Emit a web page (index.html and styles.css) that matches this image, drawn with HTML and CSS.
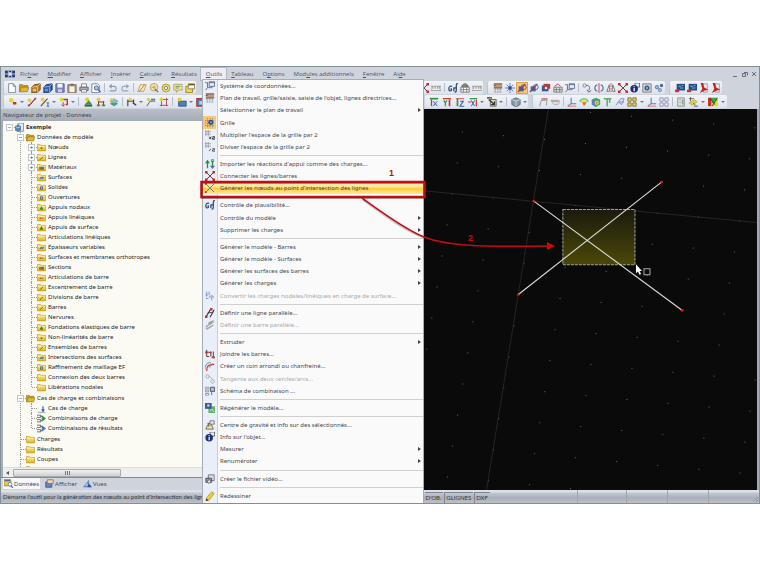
FILE: index.html
```html
<!DOCTYPE html>
<html lang="fr">
<head>
<meta charset="utf-8">
<title>Exemple</title>
<link rel="stylesheet" href="styles.css">
</head>
<body>
<svg class="defs" aria-hidden="true">
<defs>
<linearGradient id="gold" x1="0" y1="0" x2="0" y2="1"><stop offset="0" stop-color="#fbe98a"/><stop offset="1" stop-color="#e3b62c"/></linearGradient>
<symbol id="logo" viewBox="0 0 12 12"><path d="M0 2h12v8H0z" fill="#263a78"/><path d="M0 6h12M4 2v8M8 2v8" stroke="#dfe4f2"/><path d="M5 4h2v4H5z" fill="#fff"/></symbol>
<symbol id="folder" viewBox="0 0 12 12"><path d="M.5 2h4l1 1.200h6v7.300H.5z" fill="url(#gold)" stroke="#b98f22" stroke-width=".8"/><path d="M1.500 4.500h9" stroke="#fff4b0"/></symbol>
<symbol id="fopen" viewBox="0 0 12 12"><path d="M.5 10.500V2h4l1 1h5v2" fill="#c69f20" stroke="#8f701a" stroke-width=".8"/><path d="M.5 10.500 3 5h9l-2 5.500z" fill="#dfb92f" stroke="#8f701a" stroke-width=".8"/></symbol>
<symbol id="fred" viewBox="0 0 12 12"><use href="#folder"/><path d="M5 6h2v2H5z" fill="#a33"/></symbol>
<symbol id="fline" viewBox="0 0 12 12"><use href="#folder"/><path d="m4 9 4-4" stroke="#754b10" stroke-width="1.200"/></symbol>
<symbol id="fmat" viewBox="0 0 12 12"><use href="#folder"/><path d="M3 5h2v4H3z" fill="#d33"/><path d="M5 5h2v4H5z" fill="#393"/><path d="M7 5h2v4H7z" fill="#35b"/></symbol>
<symbol id="fsurf" viewBox="0 0 12 12"><use href="#folder"/><path d="m3 8 2-3h5L8 8z" fill="#5d87a8"/></symbol>
<symbol id="fsolid" viewBox="0 0 12 12"><use href="#folder"/><path d="M4 4.500h4v4.500H4z" fill="#4b7391"/><path d="M5.200 5.700h1.500v2H5.200z" fill="#a9cad8"/></symbol>
<symbol id="fsup" viewBox="0 0 12 12"><use href="#folder"/><path d="m3.500 9 2.500-5 2.500 5z" fill="#23853a"/></symbol>
<symbol id="fhinge" viewBox="0 0 12 12"><use href="#folder"/><path d="M3 7h6" stroke="#a0641b"/><circle cx="5" cy="7" r="1" fill="#d44"/></symbol>
<symbol id="book" viewBox="0 0 12 12"><path d="M4 0h7.500v11H4z" fill="#e4ebf4" stroke="#5f7390"/><path d="m0 4 4-2 4 2v6l-4 2-4-2z" fill="#5c83ad"/><path d="m1 5 3 1.500L7 5" stroke="#d9e8f5" fill="none"/></symbol>
<symbol id="lcase" viewBox="0 0 12 12"><path d="M1 11h10" stroke="#777"/><path d="M8 3v6" stroke="#2c5fae" stroke-width="1.500"/><path d="m5.500 7 2.500 4 2.500-4z" fill="#2c5fae"/></symbol>
<symbol id="lcomb" viewBox="0 0 12 12"><path d="M0 1.500h5v3H0M0 7.500h5v3H0M5 3h2v6H5" fill="none" stroke="#444"/><path d="M7 2l5 4-5 4z" fill="#279447"/></symbol>
<symbol id="rcomb" viewBox="0 0 12 12"><path d="M0 1.500h5v3H0M0 7.500h5v3H0M5 3h2v6H5" fill="none" stroke="#444"/><path d="M7 2l5 4-5 4z" fill="#3f74c5"/></symbol>
<symbol id="new" viewBox="0 0 12 12"><path d="M2 .8h5.500L10 3.500v8H2z" fill="#fff" stroke="#777a88"/><path d="M7.500 1v3H10" fill="none" stroke="#777a88"/></symbol>
<symbol id="cubeo" viewBox="0 0 12 12"><path d="m1 5 3-3 7-1v7l-3 3-7 1z" fill="#b77b2d" stroke="#6f4517"/><path d="m1 5 7-1 3-3M8 4v7" stroke="#f3cc83" fill="none"/><path d="M2 7h4v3H2z" fill="#efc35b"/></symbol>
<symbol id="cubeb" viewBox="0 0 12 12"><path d="m1 5 3-3 7-1v7l-3 3-7 1z" fill="#315a9c" stroke="#1b3567"/><path d="m1 5 7-1 3-3M8 4v7" stroke="#9fc0e8" fill="none"/><path d="M2 7h4v3H2z" fill="#6796d2"/></symbol>
<symbol id="save" viewBox="0 0 12 12"><path d="M1 1h10v10H1z" fill="#7d83c3" stroke="#50558c"/><path d="M3 1h6v4.500H3z" fill="#f2f3fb"/><path d="M3.500 7.500h5V11h-5z" fill="#c9cce4"/></symbol>
<symbol id="clip" viewBox="0 0 12 12"><path d="M1 2h10v9.500H1z" fill="#b19a7c" stroke="#75644f"/><path d="M3 4h6v7H3z" fill="#f4f1ea"/><path d="M4 1h4v2H4z" fill="#666"/></symbol>
<symbol id="print" viewBox="0 0 12 12"><path d="M3 1h6v4H3z" fill="#fff" stroke="#777"/><path d="M1 5h10v4H1z" fill="#a8adb9" stroke="#555b69"/><path d="M3 8h6v3H3z" fill="#fff" stroke="#777"/></symbol>
<symbol id="prev" viewBox="0 0 12 12"><path d="M1 1h7l2 2v8.500H1z" fill="#fff" stroke="#68779b"/><circle cx="6.500" cy="6" r="2.500" fill="#a9cbe8" stroke="#35568a"/><path d="m8.500 8 3 3" stroke="#35568a" stroke-width="1.500"/></symbol>
<symbol id="undo" viewBox="0 0 12 12"><path d="M2 4h6a3 3 0 0 1 0 5.500H2" fill="none" stroke="#8d9aae" stroke-width="1.400"/><path d="M4.500 1 1 4l3.500 3z" fill="#8d9aae"/></symbol>
<symbol id="redo" viewBox="0 0 12 12"><path d="M10 4H4a3 3 0 0 0 0 5.500h6" fill="none" stroke="#9ba6b6" stroke-width="1.400"/><path d="M7.500 1 11 4 7.500 7z" fill="#9ba6b6"/></symbol>
<symbol id="para" viewBox="0 0 12 12"><path d="m1 10 3-8h7l-3 8z" fill="#fbf0bd" stroke="#b59a35"/><path d="m3 10 6-8" stroke="#c64b37"/></symbol>
<symbol id="bub" viewBox="0 0 12 12"><circle cx="6" cy="5" r="4.500" fill="#f2e7ad" stroke="#ad974a"/><path d="M3 5h5M6 3v4" stroke="#ad974a"/><path d="m7 7 4 4" stroke="#666" stroke-width="1.500"/></symbol>
<symbol id="coin" viewBox="0 0 12 12"><circle cx="6" cy="6" r="4.800" fill="#efd875" stroke="#ae9130"/><circle cx="6" cy="6" r="2" fill="#fffbe1" stroke="#777"/></symbol>
<symbol id="note" viewBox="0 0 12 12"><path d="M1 1.500h10v7H6l-2 3v-3H1z" fill="#f7e592" stroke="#a4a168"/><path d="M3 4h6M3 6h4" stroke="#588a70"/></symbol>
<symbol id="win" viewBox="0 0 12 12"><path d="M1 4h8v7.500H1z" fill="#f8d64a" stroke="#9b7c20"/><path d="M4 1h7.500v6H4z" fill="#fffbe0" stroke="#7f7a55"/><path d="M4 2h7.500" stroke="#6c4a22" stroke-width="1.500"/></symbol>
<symbol id="node" viewBox="0 0 12 12"><circle cx="4" cy="4" r="2.800" fill="#e8d23c"/><path d="M6 6h4v3H6z" fill="#b5382c"/></symbol>
<symbol id="seg" viewBox="0 0 12 12"><path d="m2 11 8-9" stroke="#8a2f25" stroke-width="1.300"/><circle cx="3" cy="4" r="2.300" fill="#e8d23c"/><path d="M9 1h2v2H9zM1 9h2v2H1z" fill="#c33"/></symbol>
<symbol id="segi" viewBox="0 0 12 12"><path d="m1 11 8-9" stroke="#6a4a20" stroke-width="1.300"/><circle cx="3" cy="3" r="2.300" fill="#e8d23c"/><path d="M8 7h3M8 11h3M9.500 7v4" stroke="#315a9c"/></symbol>
<symbol id="rectr" viewBox="0 0 12 12"><path d="M5 3h5v6H8" fill="none" stroke="#b3352f" stroke-width="1.600"/><circle cx="3" cy="3" r="2.300" fill="#e8d23c"/><path d="M5 6v5M3 9l2 2 2-2" stroke="#b3352f" fill="none"/></symbol>
<symbol id="sup" viewBox="0 0 12 12"><circle cx="5" cy="3" r="2.500" fill="#e5cd38"/><path d="m2 9 5-5 4 5z" fill="#3d944a"/><path d="M2 9h9v2.500H2z" fill="#286a36"/></symbol>
<symbol id="supd" viewBox="0 0 12 12"><circle cx="3" cy="3" r="2.300" fill="#e5cd38"/><path d="M3 5v6M9 5v6M3 6h7" stroke="#a5322c" stroke-width="1.200"/><path d="M1 9h4v2H1zM7 9h4v2H7z" fill="#3d944a"/></symbol>
<symbol id="layer" viewBox="0 0 12 12"><path d="m1 8 5-3 5 3-5 3z" fill="#4a9b76"/><path d="m1 5 5-3 5 3-5 3z" fill="#83bfd0" stroke="#44879a" stroke-width=".5"/><circle cx="3" cy="3" r="1.800" fill="#e5cd38"/></symbol>
<symbol id="dim" viewBox="0 0 12 12"><path d="M1 3v8M1 5h7M8 3v5" stroke="#333" stroke-width="1.200"/><circle cx="4" cy="3" r="2" fill="#e5cd38"/><path d="m7 7 4 3" stroke="#333" stroke-width="1.500"/></symbol>
<symbol id="txt" viewBox="0 0 12 12"><path d="m1 11 4-6h6" stroke="#444" fill="none"/><circle cx="3" cy="3" r="2" fill="#e5cd38"/><path d="M6 2h5v2H6z" fill="#777"/></symbol>
<symbol id="frame" viewBox="0 0 12 12"><path d="M1 3h10M3 1v10M9 1v10M1 10h10" stroke="#a5423c"/><circle cx="3" cy="3" r="2" fill="#e5cd38"/></symbol>
<symbol id="blue" viewBox="0 0 12 12"><path d="M2 5h9v6H2z" fill="#4e81bd" stroke="#284b7a"/><circle cx="3" cy="3" r="2.300" fill="#e5cd38"/></symbol>
<symbol id="blur" viewBox="0 0 12 12"><path d="M1 2h10v9H1z" fill="#4e81bd" stroke="#a13a35" stroke-width="1.500"/><path d="M4 5h5v4H4z" fill="#b8d2e8"/></symbol>
<symbol id="fx" viewBox="0 0 12 12"><path d="M5 4c-3-1-4 1-4 3s1 3 3 2V7H3M7 5v5M7 7c1-2 3-1 3 0M12 1c-2-1-2 1-2 3v4c0 2-1 3-2 3" fill="none" stroke="#3d5279" stroke-width="1.600"/></symbol>
<symbol id="tbl" viewBox="0 0 12 12"><path d="M1 5h10v6H1z" fill="#fff" stroke="#666"/><path d="M1 8h10M4 5v6M8 5v6" stroke="#777"/><path d="M2 4c2-4 6-4 8 0z" fill="#8a9a78" stroke="#555"/></symbol>
<symbol id="num" viewBox="0 0 12 12"><path d="M0 4h12v5H0z" fill="#eee" stroke="#999"/><path d="M2 4v3M5 4v3M8 4v3M10 4v3" stroke="#888"/></symbol>
<symbol id="plane" viewBox="0 0 12 12"><path d="M1 1h10v5H1z" fill="#c39a78"/><path d="M1 1h10M1 6h10M1 3h2" stroke="#444"/><path d="M1 8h10M1 11h10M3 6v6M6 6v6M9 6v6" stroke="#888" stroke-dasharray="1 1"/></symbol>
<symbol id="snap" viewBox="0 0 12 12"><path d="M6 0v12M0 6h12M2 2l8 8M10 2l-8 8" stroke="#637cb3" stroke-width="1.100"/><circle cx="6" cy="6" r="2" fill="#2b448b"/></symbol>
<symbol id="gridi" viewBox="0 0 12 12"><path d="M0 3h12M0 6h12M0 9h12M3 0v12M6 0v12M9 0v12" stroke="#75736d" stroke-dasharray="1 1"/><circle cx="7" cy="5" r="3" fill="#294b91"/><circle cx="7" cy="5" r="1" fill="#8cc0ef"/></symbol>
<symbol id="osnap" viewBox="0 0 12 12"><path d="M2 4h6v6H2z" fill="#3966a5"/><path d="m1 11 9-10" stroke="#b83838" stroke-width="1.500"/><circle cx="8" cy="5" r="3" fill="none" stroke="#315a9c"/></symbol>
<symbol id="redb" viewBox="0 0 12 12"><path d="M1 3h8v7H1z" fill="#315a9c"/><path d="M3 1h8v6H3z" fill="#b43a3f"/><circle cx="6" cy="6" r="1.500" fill="#fff"/></symbol>
<symbol id="gridr" viewBox="0 0 12 12"><path d="M1 5h10v6H1z" fill="#ddd" stroke="#777"/><path d="M1 8h10M4 5v6M8 5v6" stroke="#777"/><path d="m2 4 4-3 3 3" stroke="#b33" fill="none"/></symbol>
<symbol id="coord" viewBox="0 0 12 12"><path d="M5 1h6.500v5.500H5z" fill="#e8edf6" stroke="#53617c"/><path d="M5 2h6.500" stroke="#53617c"/><path d="M3 2v6h6M3 8l-2.500 3M3 2H0" stroke="#53617c" fill="none"/></symbol>
<symbol id="curve" viewBox="0 0 12 12"><circle cx="3" cy="3" r="2" fill="none" stroke="#777"/><path d="M5 3c4-1 5 3 3 6M6 8l2 3 3-2" fill="none" stroke="#555"/></symbol>
<symbol id="rot" viewBox="0 0 12 12"><path d="M6 0v12" stroke="#c33"/><path d="M4 2c-4 1-4 7 0 8M8 2c4 1 4 7 0 8" fill="none" stroke="#54719f" stroke-width="1.300"/></symbol>
<symbol id="mirror" viewBox="0 0 12 12"><path d="M6 0v12" stroke="#c33" stroke-dasharray="2 1"/><path d="m1 10 3-8v8zM11 10 8 2v8z" fill="#fff" stroke="#666"/></symbol>
<symbol id="xnode" viewBox="0 0 12 12"><path d="m1 1 10 10M11 1 1 11" stroke="#333" stroke-width="1.100"/><path d="M0 0h3v3H0zM9 0h3v3H9zM0 9h3v3H0zM9 9h3v3H9zM5 5h2v2H5z" fill="#c22d2d"/></symbol>
<symbol id="xgen" viewBox="0 0 12 12"><path d="m1 1 10 10M11 1 1 11" stroke="#777350" stroke-width="1.100"/><path d="M0 0h2v2H0zM0 10h2v2H0z" fill="#c22d2d"/><circle cx="6" cy="6" r="1.500" fill="#39a7ce"/></symbol>
<symbol id="info" viewBox="0 0 12 12"><path d="M6 0h5.500v5H6z" fill="#e8edf6" stroke="#555"/><circle cx="5" cy="7" r="4.500" fill="#1c2f78"/><path d="M5 4v1M5 6v4" stroke="#fff" stroke-width="1.500"/></symbol>
<symbol id="lens" viewBox="0 0 12 12"><path d="M1 1h10v10H1z" fill="#d2d3c9" stroke="#777"/><circle cx="6" cy="6" r="3" fill="#335a9a"/><circle cx="6" cy="6" r="1" fill="#fff"/></symbol>
<symbol id="gears" viewBox="0 0 12 12"><circle cx="3.500" cy="5" r="2.500" fill="#6f8ab6"/><circle cx="9" cy="3" r="2" fill="#4b6798"/><circle cx="7" cy="8.500" r="2.500" fill="#7b96bf"/><path d="M3.500 5h0M7 8.500h0" stroke="#fff" stroke-width="1.600" stroke-linecap="round"/></symbol>
<symbol id="mona" viewBox="0 0 12 12"><path d="M2 1h10v8H2z" fill="#244e83"/><path d="M4 4h3M8 3h2M6 6h4" stroke="#8cc1e8"/><path d="M0 8h5v3H0z" fill="#c33"/></symbol>
<symbol id="pdf" viewBox="0 0 12 12"><path d="M5 1h5v10H5z" fill="#e9e9ed" stroke="#999"/><path d="M2 0h3l1 5 5 3-4 1-6 3 3-5z" fill="#c8201f"/></symbol>
<symbol id="ax" viewBox="0 0 12 12"><path d="M1 2h10" stroke="#2a963c" stroke-width="2"/><path d="M3 3v8" stroke="#c33" stroke-width="1.500"/><path d="m5 5 5 6M10 5l-5 6" stroke="#3863b2" stroke-width="1.200"/></symbol>
<symbol id="ay" viewBox="0 0 12 12"><path d="M1 2h10" stroke="#c33" stroke-width="1.500"/><path d="m2 4 2 3 2-3M4 7v4" stroke="#2a963c" stroke-width="1.400" fill="none"/><path d="M9 3v8" stroke="#c33" stroke-width="2"/></symbol>
<symbol id="az" viewBox="0 0 12 12"><path d="M1 2h10" stroke="#c33"/><path d="M3 2v9" stroke="#2a963c" stroke-width="2"/><path d="M6 5h4l-4 6h5" stroke="#3863b2" stroke-width="1.300" fill="none"/></symbol>
<symbol id="amx" viewBox="0 0 12 12"><path d="M2 2h9" stroke="#2a963c" stroke-width="1.500"/><path d="M0 6h4M10 3v8" stroke="#c33" stroke-width="1.400"/><path d="m4 4 4 7M8 4l-4 7" stroke="#3863b2" stroke-width="1.200"/></symbol>
<symbol id="iso" viewBox="0 0 12 12"><path d="M4 3h7v8H4z" fill="#e8e098" stroke="#555"/><path d="M0 1h6M2 3l7 6M9 5v4H5" stroke="#333" stroke-width="1.500" fill="none"/></symbol>
<symbol id="cube" viewBox="0 0 12 12"><path d="m1 3 5-2 5 2v6l-5 3-5-3z" fill="#8899aa" stroke="#5d6b79"/><path d="m1 3 5 2 5-2M6 5v6" stroke="#d5dfe8" fill="none"/></symbol>
<symbol id="portal" viewBox="0 0 12 12"><path d="M2 11 4 4l7-2-1 8M4 4h6" fill="none" stroke="#999" stroke-width="1.200"/><path d="M4 2h7" stroke="#c55"/></symbol>
<symbol id="disc" viewBox="0 0 12 12"><path d="M1 4h10v3c0 3-8 3-8 0z" fill="#ddd" stroke="#aaa"/><path d="M2 5h8" stroke="#888"/></symbol>
<symbol id="xy" viewBox="0 0 12 12"><path d="M5 1v7h6M5 8l-4 3" stroke="#5c7bbc" stroke-width="1.300" fill="none"/><path d="M1 11h10" stroke="#d66"/></symbol>
<symbol id="iris" viewBox="0 0 12 12"><path d="M0 5c3-5 9-5 12 0L6 8z" fill="#67c3a1"/><path d="M2 5c2-3 6-3 8 0L6 9z" fill="#eedb4f"/><path d="m4 7 2-1 3 1-3 4z" fill="#e36c43"/></symbol>
<symbol id="rcube" viewBox="0 0 12 12"><path d="m1 3 5-2 5 2v6l-5 3-5-3z" fill="#43a66a"/><path d="m1 3 5 2v7L1 9z" fill="#5b83c9"/><circle cx="7" cy="7" r="2.500" fill="#e6db55"/><circle cx="7" cy="7" r="1" fill="#d54b3b"/></symbol>
<symbol id="sprout" viewBox="0 0 12 12"><path d="M1 2h9M5 3v8M8 2v5" stroke="#61a967" stroke-width="1.800"/></symbol>
<symbol id="para2" viewBox="0 0 12 12"><path d="m1 10 3-4h7M4 6l3-4h4L8 9z" fill="#dfe5f3" stroke="#7187b4"/></symbol>
<symbol id="four" viewBox="0 0 12 12"><path d="M1 1h4v4H1zM7 1h4v4H7zM1 7h4v4H1zM7 7h4v4H7z" fill="#f1d64b" stroke="#696546"/></symbol>
<symbol id="fourg" viewBox="0 0 12 12"><path d="M1 1h4v4H1zM7 1h4v4H7zM1 7h4v4H1zM7 7h4v4H7z" fill="#e9e9f3" stroke="#8b8da5"/></symbol>
<symbol id="sheet" viewBox="0 0 12 12"><path d="M2 1h8v10H2z" fill="#ddd" stroke="#888"/><path d="M4 3h2v1H4zM4 6h2v1H4zM7 3h2v6H7z" fill="#8a8"/></symbol>
<symbol id="pens" viewBox="0 0 12 12"><path d="M1 2h6M3 0v5M7 11h5" stroke="#555"/><path d="m1 7 7-4 3 3-6 4z" fill="#e5cf48" stroke="#8b7b2a" stroke-width=".5"/><path d="m6 7 3 3" stroke="#555"/></symbol>
<symbol id="rain" viewBox="0 0 12 12"><path d="M0 1h12v10H0z" fill="#e5db38"/><path d="M0 1h4v10H0z" fill="#cf302b"/><path d="m3 1 9 0-6 7z" fill="#37a448"/><path d="m2 1 6 8M5 11l6-9" stroke="#333" fill="none"/></symbol>
<symbol id="mul" viewBox="0 0 12 12"><path d="M1 0v7M4 0v7M0 2h7M0 5h7" stroke="#999"/><path d="m5 8 2.500 3M7.500 8 5 11M9 8h2.500v1.500H9V11h3" stroke="#222" fill="none"/></symbol>
<symbol id="div" viewBox="0 0 12 12"><path d="M1 0v7M4 0v7M0 2h7M0 5h7" stroke="#999"/><path d="m5 11 2-3M9 8h2.500v1.500H9V11h3" stroke="#444" fill="none"/></symbol>
<symbol id="imp" viewBox="0 0 12 12"><path d="M3 11V3M9 2v8" stroke="#258c43" stroke-width="1.600"/><path d="M0 5l3-4 3 4z" fill="#258c43"/><path d="M6 8l3 4 3-4z" fill="#456ca8"/><circle cx="9" cy="2" r="1.500" fill="none" stroke="#555"/></symbol>
<symbol id="conv" viewBox="0 0 12 12"><path d="M2 1v5M5 1v4M8 7v4M1 4l1 2 1-2M5 8c2-4 5-2 5 0M1 9h3" stroke="#8b9cc8" stroke-width="1.300" fill="none"/></symbol>
<symbol id="parl" viewBox="0 0 12 12"><path d="m1 11 6-10M6 11l5-9" stroke="#333" stroke-width="1.300"/><path d="M0 9h3v3H0zM6 0h3v3H6z" fill="#b43a35"/><path d="m3 6 7-1" stroke="#333"/></symbol>
<symbol id="parg" viewBox="0 0 12 12"><path d="m1 8 8-5M2 11l8-5M4 4l6-3" stroke="#999" stroke-width="1.500"/><path d="M8 1h3v2H8zM1 9h3v2H1z" fill="#bba6a6"/></symbol>
<symbol id="join" viewBox="0 0 12 12"><path d="M2 1v8h3M10 3v8M4 4h3v5" stroke="#444" stroke-width="1.200" fill="none"/><path d="M0 3h4v2H0zM8 9h4v2H8zM6 3h2v2H6z" fill="#c33"/></symbol>
<symbol id="arc" viewBox="0 0 12 12"><path d="M2 12c0-6 2-8 9-8" stroke="#c43b36" stroke-width="1.500" fill="none"/><path d="M0 10c0-6 3-8 7-8M5 8l4-5" stroke="#666" fill="none"/></symbol>
<symbol id="tan" viewBox="0 0 12 12"><circle cx="3" cy="3" r="2" fill="none" stroke="#aaa"/><circle cx="9" cy="9" r="2" fill="none" stroke="#aaa"/><path d="m4 2 6 5" stroke="#aaa"/></symbol>
<symbol id="sch" viewBox="0 0 12 12"><path d="M.5 1.500h4v2h-4zM.5 5h4v2h-4zM.5 9h4v2h-4z" fill="#fff" stroke="#889"/><path d="M6.500 1.500h5v5h-5z" fill="#aebbd6" stroke="#445"/><path d="M8 7v4" stroke="#36a"/></symbol>
<symbol id="regen" viewBox="0 0 12 12"><path d="M4 4h8v8H4z" fill="#62b364"/><path d="m6 10 2-3 3 4" stroke="#d9f0d5" fill="none"/><path d="M0 0h8v7H0z" fill="#3b5a8f"/><circle cx="4" cy="3" r="1.500" fill="#c3d5ed"/></symbol>
<symbol id="grav" viewBox="0 0 12 12"><path d="M6 1h5v4H6z" fill="#eee" stroke="#666"/><path d="m1 11 2-5h5l2 5z" fill="#eadf9c" stroke="#6c663f"/><path d="M3 4h3M4 4v4" stroke="#555"/></symbol>
<symbol id="video" viewBox="0 0 12 12"><path d="M4 1h7v7H4z" fill="#dde" stroke="#667"/><path d="M1 5h7v5H1z" fill="#9298ac" stroke="#444"/><circle cx="5" cy="9" r="2" fill="#eee" stroke="#555"/></symbol>
<symbol id="pencil" viewBox="0 0 12 12"><path d="m2 8 6-7 3 2-6 8-4 1z" fill="#f2cf31" stroke="#9a7b1c" stroke-width=".7"/><path d="m1 12 1-3 2 2z" fill="#222"/></symbol>
<symbol id="tabd" viewBox="0 0 12 12"><path d="M0 1h9v8H0z" fill="#f2c948" stroke="#8c7020"/><path d="M1 1h7v2H1z" fill="#3e6cac"/><circle cx="8" cy="7" r="2.500" fill="#fff" stroke="#3e6cac"/><path d="m9 9 3 3" stroke="#3e6cac" stroke-width="1.500"/></symbol>
<symbol id="taba" viewBox="0 0 12 12"><path d="M1 4h8v7H1z" fill="#6288bd" stroke="#304e7e"/><path d="M3 1h8v5H3z" fill="#e9d6bd" stroke="#a54"/></symbol>
<symbol id="tabv" viewBox="0 0 12 12"><path d="m0 11 8-10v10z" fill="#5c80c2"/><path d="m3 9 3-4v4z" fill="#dce7f6"/><path d="m8 6 4 5H6" fill="#2c4d91"/></symbol>
</defs>
</svg>

<div class="app">
<header class="menubar">
<svg class="ico"><use href="#logo"/></svg>
<nav class="menus">
<a href="#">Fic<u>h</u>ier</a><a href="#"><u>M</u>odifier</a><a href="#"><u>A</u>fficher</a><a href="#"><u>I</u>nsérer</a><a href="#"><u>C</u>alculer</a><a href="#"><u>R</u>ésultats</a><a href="#" class="open"><u>O</u>utils</a><a href="#"><u>T</u>ableau</a><a href="#">O<u>p</u>tions</a><a href="#">Mod<u>u</u>les additionnels</a><a href="#"><u>F</u>enêtre</a><a href="#">Ai<u>d</u>e</a>
</nav>
<div class="winctl"><button aria-label="Réduire"><svg viewBox="0 0 6 6"><path d="M0 5.500h4"/></svg></button><button aria-label="Restaurer"><svg viewBox="0 0 6 6"><path d="M.5 2.500h3v3h-3zM2 1.500h3.500v3"/></svg></button><button aria-label="Fermer"><svg viewBox="0 0 6 6"><path d="m1 1 4 4M5 1 1 5"/></svg></button></div>
</header>

<div class="toolbar">
<div class="half left"><div class="group grip">
<button aria-label="Nouveau"><svg><use href="#new"/></svg></button><button aria-label="Ouvrir"><svg><use href="#fopen"/></svg></button><button aria-label="Projet"><svg><use href="#cubeo"/></svg></button><button aria-label="Bloc"><svg><use href="#cubeb"/></svg></button><button aria-label="Enregistrer"><svg><use href="#save"/></svg></button><button aria-label="Presse-papiers"><svg><use href="#clip"/></svg></button><button aria-label="Imprimer"><svg><use href="#print"/></svg></button><button aria-label="Aperçu"><svg><use href="#prev"/></svg></button><i class="sep"></i><button aria-label="Annuler"><svg><use href="#undo"/></svg></button><button aria-label="Rétablir"><svg><use href="#redo"/></svg></button><i class="sep"></i><button aria-label="Plan"><svg><use href="#para"/></svg></button><button aria-label="Zoom"><svg><use href="#bub"/></svg></button><button aria-label="Vue"><svg><use href="#coin"/></svg></button><button aria-label="Commentaire"><svg><use href="#note"/></svg></button><button aria-label="Fenêtres"><svg><use href="#win"/></svg></button>
</div></div>
<div class="half right"><div class="group first">
<button aria-label="Nœuds"><svg><use href="#xnode"/></svg></button><button aria-label="Valeurs"><svg><use href="#num"/></svg></button><i class="sep"></i><button aria-label="Plausibilité"><svg><use href="#fx"/></svg></button><button aria-label="Tableau"><svg><use href="#tbl"/></svg></button><button aria-label="Numéros"><svg><use href="#num"/></svg></button></div><div class="group grip"><button aria-label="Plan de travail"><svg><use href="#plane"/></svg></button><button aria-label="Accrochage"><svg><use href="#snap"/></svg></button><button class="on" aria-label="Accrochage objet"><svg><use href="#osnap"/></svg></button><button aria-label="Objet"><svg><use href="#osnap"/></svg></button><button aria-label="Fond"><svg><use href="#redb"/></svg></button><button aria-label="Grille"><svg><use href="#gridr"/></svg></button><button aria-label="Coordonnées"><svg><use href="#coord"/></svg></button><i class="sep"></i><button aria-label="Copier"><svg><use href="#curve"/></svg></button><button aria-label="Rotation"><svg><use href="#rot"/></svg></button><button aria-label="Miroir"><svg><use href="#mirror"/></svg></button><button aria-label="Connecter"><svg><use href="#xnode"/></svg></button><button aria-label="Info"><svg><use href="#info"/></svg></button><button aria-label="Loupe"><svg><use href="#lens"/></svg></button><button aria-label="Réglages"><svg><use href="#gears"/></svg></button></div><div class="group grip"><button aria-label="Module 1"><svg><use href="#mona"/></svg></button><button aria-label="Module 2"><svg><use href="#mona"/></svg></button><button aria-label="Module 3"><svg><use href="#pdf"/></svg></button><button aria-label="Module 4"><svg><use href="#pdf"/></svg></button>
</div></div>
</div>

<div class="toolbar wide">
<div class="half left"><div class="group grip">
<button aria-label="Nœud"><svg><use href="#node"/></svg></button><i class="caret"></i><button aria-label="Ligne"><svg><use href="#seg"/></svg></button><button aria-label="Barre"><svg><use href="#segi"/></svg></button><i class="caret"></i><button aria-label="Surface"><svg><use href="#rectr"/></svg></button><i class="caret"></i><i class="sep"></i><button aria-label="Appui nodal"><svg><use href="#sup"/></svg></button><button aria-label="Appui linéique"><svg><use href="#supd"/></svg></button><button aria-label="Appui de surface"><svg><use href="#layer"/></svg></button><i class="sep"></i><button aria-label="Cote"><svg><use href="#dim"/></svg></button><i class="caret"></i><button aria-label="Texte"><svg><use href="#txt"/></svg></button><button aria-label="Cadre"><svg><use href="#frame"/></svg></button><i class="sep"></i><button aria-label="Solide"><svg><use href="#blue"/></svg></button><i class="caret"></i><button aria-label="Ouverture"><svg><use href="#blur"/></svg></button>
</div></div>
<div class="half right"><div class="group second">
<button aria-label="Vue X"><svg><use href="#ax"/></svg></button><button aria-label="Vue Y"><svg><use href="#ay"/></svg></button><button aria-label="Vue Z"><svg><use href="#az"/></svg></button><button aria-label="Vue -X"><svg><use href="#amx"/></svg></button><i class="caret"></i><button aria-label="Isométrie"><svg><use href="#iso"/></svg></button><i class="caret"></i><i class="sep"></i><button aria-label="Rendu"><svg><use href="#cube"/></svg></button><i class="caret"></i></div><div class="group grip"><button aria-label="Portique"><svg><use href="#portal"/></svg></button><button aria-label="Disque"><svg><use href="#disc"/></svg></button><i class="sep"></i><button aria-label="Axes"><svg><use href="#xy"/></svg></button><button aria-label="Isovaleurs"><svg><use href="#iris"/></svg></button><button aria-label="Contraintes"><svg><use href="#rcube"/></svg></button><button aria-label="Réactions"><svg><use href="#sprout"/></svg></button><button aria-label="Coupe"><svg><use href="#para2"/></svg></button><button aria-label="Fenêtres"><svg><use href="#four"/></svg></button><i class="caret"></i><button aria-label="Repère"><svg><use href="#xy"/></svg></button><button aria-label="Mosaïque"><svg><use href="#fourg"/></svg></button><i class="sep"></i><button aria-label="Feuille"><svg><use href="#sheet"/></svg></button><button aria-label="Crayons"><svg><use href="#pens"/></svg></button><i class="caret"></i><button aria-label="Couleurs"><svg><use href="#rain"/></svg></button><i class="caret"></i>
</div></div>
</div>

<main class="work">
<section class="navigator">
<h2>Navigateur de projet - Données</h2>
<div class="treebox">
<ul class="tree">
<li><div class="row root"><b class="exp">−</b><svg><use href="#book"/></svg>Exemple</div>
<ul>
<li><div class="row"><b class="exp">−</b><svg><use href="#fopen"/></svg>Données de modèle</div>
<ul>
<li><div class="row"><b class="exp">+</b><svg><use href="#fred"/></svg>Nœuds</div></li>
<li><div class="row"><b class="exp">+</b><svg><use href="#fline"/></svg>Lignes</div></li>
<li><div class="row"><b class="exp">+</b><svg><use href="#fmat"/></svg>Matériaux</div></li>
<li><div class="row"><svg><use href="#fsurf"/></svg>Surfaces</div></li>
<li><div class="row"><svg><use href="#fsolid"/></svg>Solides</div></li>
<li><div class="row"><svg><use href="#fsolid"/></svg>Ouvertures</div></li>
<li><div class="row"><svg><use href="#fsup"/></svg>Appuis nodaux</div></li>
<li><div class="row"><svg><use href="#fhinge"/></svg>Appuis linéiques</div></li>
<li><div class="row"><svg><use href="#fsup"/></svg>Appuis de surface</div></li>
<li><div class="row"><svg><use href="#folder"/></svg>Articulations linéiques</div></li>
<li><div class="row"><svg><use href="#fsurf"/></svg>Épaisseurs variables</div></li>
<li><div class="row"><svg><use href="#fhinge"/></svg>Surfaces et membranes orthotropes</div></li>
<li><div class="row"><svg><use href="#fmat"/></svg>Sections</div></li>
<li><div class="row"><svg><use href="#fhinge"/></svg>Articulations de barre</div></li>
<li><div class="row"><svg><use href="#fline"/></svg>Excentrement de barre</div></li>
<li><div class="row"><svg><use href="#fline"/></svg>Divisions de barre</div></li>
<li><div class="row"><svg><use href="#fline"/></svg>Barres</div></li>
<li><div class="row"><svg><use href="#folder"/></svg>Nervures</div></li>
<li><div class="row"><svg><use href="#fsup"/></svg>Fondations élastiques de barre</div></li>
<li><div class="row"><svg><use href="#fred"/></svg>Non-linéarités de barre</div></li>
<li><div class="row"><svg><use href="#fline"/></svg>Ensembles de barres</div></li>
<li><div class="row"><svg><use href="#fsurf"/></svg>Intersections des surfaces</div></li>
<li><div class="row"><svg><use href="#fsolid"/></svg>Raffinement de maillage EF</div></li>
<li><div class="row"><svg><use href="#folder"/></svg>Connexion des deux barres</div></li>
<li><div class="row"><svg><use href="#folder"/></svg>Libérations nodales</div></li>
</ul></li>
<li><div class="row"><b class="exp">−</b><svg><use href="#fopen"/></svg>Cas de charge et combinaisons</div>
<ul>
<li><div class="row"><svg><use href="#lcase"/></svg>Cas de charge</div></li>
<li><div class="row"><svg><use href="#lcomb"/></svg>Combinaisons de charge</div></li>
<li><div class="row"><svg><use href="#rcomb"/></svg>Combinaisons de résultats</div></li>
</ul></li>
<li><div class="row"><svg><use href="#folder"/></svg>Charges</div></li>
<li><div class="row"><svg><use href="#folder"/></svg>Résultats</div></li>
<li><div class="row"><svg><use href="#folder"/></svg>Coupes</div></li>
<li class="cut"><div class="row"><svg><use href="#folder"/></svg>Régions</div></li>
</ul></li>
</ul>
<div class="hscroll"><i class="larr"></i><i class="thumb"></i></div>
</div>
<div class="tabs">
<button class="active"><svg><use href="#tabd"/></svg>Données</button><button><svg><use href="#taba"/></svg>Afficher</button><button><svg><use href="#tabv"/></svg>Vues</button>
</div>
</section>
<section class="viewport">
<svg viewBox="229 109 528 381" preserveAspectRatio="xMaxYMin slice">
<defs>
<pattern id="pts" patternUnits="userSpaceOnUse" width="41" height="31" patternTransform="matrix(1 .094 -.164 1 534.500 201)"><path d="M0 0h1v1H0z" fill="#6a6a6a"/></pattern>
<linearGradient id="sel" x1="0" y1="0" x2="0" y2="1"><stop offset="0" stop-color="#1b1a0d"/><stop offset="1" stop-color="#4c4808"/></linearGradient>
</defs>
<path d="M228 109h530v382H228z" fill="#0a0a0a"/>
<path d="M228 109h530v382H228z" fill="url(#pts)"/>
<path d="M228 172 758 222.500M549 109 487 491" stroke="#2c2c2c" stroke-width=".8"/>
<rect x="563.500" y="209.500" width="72" height="55" fill="url(#sel)"/>
<path d="M563.500 209.500h72v55h-72z" fill="none" stroke="#a4a496" stroke-dasharray="3 1"/>
<path d="M534.500 201 682.500 310M662 182 519 294.300" stroke="#dcdcdc" stroke-width="1.100"/>
<g fill="#f01414"><circle cx="534.500" cy="201" r="1.300"/><circle cx="682.500" cy="310" r="1.300"/><circle cx="662" cy="182" r="1.300"/><circle cx="519" cy="294.300" r="1.300"/></g>
<path d="M636.500 264v9l2-1.600 1.500 3.200 1.600-.8-1.500-3h2.400z" fill="#fff"/>
<path d="M644.500 268.500h6v6h-6z" fill="none" stroke="#aaa"/>
</svg>
</section>
</main>

<footer class="status">
<p>Démarre l'outil pour la génération des nœuds au point d'intersection des lignes</p>
<span>D'OB.</span><span>GLIGNES</span><span>DXF</span><i></i><i></i><i></i><i></i><b class="resize"></b>
</footer>

<menu class="dropdown">
<li><button><svg><use href="#coord"/></svg>Système de coordonnées...</button></li>
<li><button><svg><use href="#plane"/></svg>Plan de travail, grille/saisie, saisie de l'objet, lignes directrices...</button></li>
<li><button class="sub">Sélectionner le plan de travail</button></li>
<li><button class="checked"><svg><use href="#gridi"/></svg>Grille</button></li>
<li><button><svg><use href="#mul"/></svg>Multiplier l'espace de la grille par 2</button></li>
<li><button><svg><use href="#div"/></svg>Diviser l'espace de la grille par 2</button></li>
<li class="rule"></li>
<li><button><svg><use href="#imp"/></svg>Importer les réactions d'appui comme des charges...</button></li>
<li><button><svg><use href="#xnode"/></svg>Connecter les lignes/barres</button></li>
<li><button class="hot"><svg><use href="#xgen"/></svg>Générer les nœuds au point d'intersection des lignes</button></li>
<li class="rule"></li>
<li><button><svg><use href="#fx"/></svg>Contrôle de plausibilité...</button></li>
<li><button class="sub">Contrôle du modèle</button></li>
<li><button class="sub">Supprimer les charges</button></li>
<li class="rule"></li>
<li><button class="sub">Générer le modèle - Barres</button></li>
<li><button class="sub">Générer le modèle - Surfaces</button></li>
<li><button class="sub">Générer les surfaces des barres</button></li>
<li><button class="sub">Générer les charges</button></li>
<li><button disabled><svg><use href="#conv"/></svg>Convertir les charges nodales/linéiques en charge de surface...</button></li>
<li class="rule"></li>
<li><button><svg><use href="#parl"/></svg>Définir une ligne parallèle...</button></li>
<li><button disabled><svg><use href="#parg"/></svg>Définir une barre parallèle...</button></li>
<li class="rule"></li>
<li><button class="sub">Extruder</button></li>
<li><button><svg><use href="#join"/></svg>Joindre les barres...</button></li>
<li><button><svg><use href="#arc"/></svg>Créer un coin arrondi ou chanfreiné...</button></li>
<li><button disabled><svg><use href="#tan"/></svg>Tangente aux deux cercles/arcs...</button></li>
<li><button><svg><use href="#sch"/></svg>Schéma de combinaison ...</button></li>
<li class="rule"></li>
<li><button><svg><use href="#regen"/></svg>Régénérer le modèle...</button></li>
<li class="rule"></li>
<li><button><svg><use href="#grav"/></svg>Centre de gravité et info sur des sélectionnés...</button></li>
<li><button><svg><use href="#info"/></svg>Info sur l'objet...</button></li>
<li><button class="sub">Mesurer</button></li>
<li><button class="sub">Renuméroter</button></li>
<li class="rule"></li>
<li><button><svg><use href="#video"/></svg>Créer le fichier vidéo...</button></li>
<li class="rule"></li>
<li><button><svg><use href="#pencil"/></svg>Redessiner</button></li>
</menu>

<svg class="callouts" viewBox="0 66 760 438">
<rect x="202" y="183" width="224" height="15" fill="none" stroke="#000" stroke-opacity=".3" stroke-width="2"/>
<rect x="201.500" y="182" width="223" height="15" fill="none" stroke="#c00d12" stroke-width="2.500"/>
<path d="M363 200c18 13 42 31 62 38 22 9 56 10 124 10" fill="none" stroke="#000" stroke-opacity=".2" stroke-width="2"/>
<path d="M362 198c18 13 42 31 62 39 22 9 56 10 124 9" fill="none" stroke="#c00d12" stroke-width="1.600"/>
<path d="m547 242 8 4-8 4z" fill="#c80a0e"/>
<text x="389" y="176">1</text><text x="468" y="241">2</text>
</svg>
</div>
</body>
</html>
```
FILE: styles.css
```css
* { box-sizing: border-box; }
body { margin: 0; background: #fff; font: 6px/10px "Noto Sans", "Open Sans", sans-serif; color: #34383f; }
button { border: 0; padding: 0; margin: 0; background: none; font: inherit; color: inherit; }
a { color: inherit; text-decoration: none; }
ul, menu { list-style: none; margin: 0; padding: 0; }
.defs { position: absolute; width: 0; height: 0; }

.app { position: relative; margin-top: 66px; background: #ced3dc; border: 1px solid #7f9097; overflow: hidden; }

.menubar { display: flex; align-items: center; height: 14px; padding-left: 4px; background: #ced3dc; }
.menubar .ico { width: 10px; height: 10px; }
.menus { display: flex; flex: 1; color: #4a5362; font-family: "Open Sans", "Noto Sans", sans-serif; }
.menus a { padding: 0 4px 0 5px; line-height: 12px; white-space: nowrap; }
.menus .open { background: #eceef3; box-shadow: 0 0 0 1px #b3b9c4; }
.winctl { display: flex; gap: 3px; padding-right: 2px; }
.winctl svg { display: block; width: 6px; height: 6px; fill: none; stroke: #666e7a; }

.toolbar { display: flex; height: 14px; }
.half { display: flex; }
.left { flex: 0 0 56%; overflow: hidden; }
.group { display: flex; align-items: center; height: 13px; border-radius: 2px; background: linear-gradient(#f2f4f9, #dde2ee); }
.group button { flex: none; width: 12px; height: 12px; padding: 1px; }
.wide .left button, .group.second button { width: 13px; padding: 1px 1px 1px 2px; }
.group svg { display: block; width: 10px; height: 10px; }
.group .on { background: #fcc672; outline: 1px solid #d9a254; outline-offset: -1px; }
.left .group { margin-left: 2px; }
.grip { border-left: 1px dotted #9aa3b3; padding-left: 2px; }
.right .grip { margin-left: 4px; padding-left: 4px; }
.right .first { margin-left: -7px; }
.right .second { padding-left: 2px; }
.sep { width: 5px; height: 9px; border-left: 1px solid #b6bdca; transform: translateX(2px); }
.caret { width: 6px; height: 12px; display: grid; place-items: center; }
.caret::before { content: ""; border: 2px solid transparent; border-top-color: #777; border-bottom: 0; }
.right .grip .caret { width: 8px; }

.work { display: flex; }
.navigator { flex: 0 0 30%; min-width: 0; }
.navigator h2 { margin: 0; padding-left: 2px; font-size: 6px; font-weight: 400; line-height: 12px; color: #3f4650; background: linear-gradient(#b9bfc8, #a5acb6); }
.treebox { border-left: 2px solid #a3adb8; background: #fcfbf3; overflow: hidden; }
.tree { padding: 1px 0 0 3px; }
.tree ul { padding-left: 11px; }
.tree ul ul { padding-bottom: 1px; }
.tree li { position: relative; }
.tree ul li::before { content: ""; position: absolute; left: 3px; top: 0; bottom: 0; border-left: 1px dotted #999; }
.tree ul ul li:last-child::before { bottom: 5px; }
.row { position: relative; display: flex; align-items: center; height: 10px; padding-left: 9px; white-space: nowrap; color: #22242a; }
.row::before { content: ""; position: absolute; left: 4px; top: 5px; width: 5px; border-top: 1px dotted #999; }
.row svg { width: 9px; height: 9px; margin-right: 2px; }
.root { font-weight: 700; }
.exp { position: absolute; left: 1px; top: 3px; z-index: 1; width: 5px; height: 5px; background: #fff; box-shadow: 0 0 0 1px #c3c8d0; font: 6px/4px "Liberation Sans", sans-serif; text-align: center; color: #335; }
.tree .cut { height: 3px; overflow: hidden; }
.hscroll { display: flex; align-items: center; height: 10px; background: #eee; border-top: 1px solid #ddd; }
.larr { margin: 0 4px 0 3px; border: 2px solid transparent; border-right: 3px solid #555; border-left: 0; }
.thumb { width: 108px; height: 8px; border: 1px solid #aaa; border-radius: 1px; background: linear-gradient(#f2f2f2, #cfcfcf); display: grid; place-items: center; }
.thumb::before { content: ""; width: 5px; height: 4px; background: repeating-linear-gradient(90deg, #777 0 1px, transparent 1px 2px); }
.tabs { display: flex; gap: 4px; height: 13px; padding: 0 2px 1px; border-top: 1px solid #7f8b99; color: #454d5a; }
.tabs button { display: flex; align-items: center; gap: 1px; padding: 0 1px; }
.tabs .active { background: #f6f7fa; }
.tabs svg { width: 9px; height: 9px; }

.viewport { position: relative; flex: 1; background: #0a0a0a; border-right: 2px solid #a3a9b3; }
.viewport svg { position: absolute; width: 100%; height: 100%; }

.status { display: flex; height: 13px; background: linear-gradient(#dde0e4, #dde0e4 2px, #c3c8d0 3px, #a9afb9 60%, #bcc1c9); font-family: Lato, "Noto Sans", sans-serif; line-height: 14px; }
.status p { flex: 0 0 27%; margin: 0 29% 0 0; padding-left: 2px; overflow: hidden; white-space: nowrap; }
.status span { padding: 0 2px 0 1px; margin: 2px 1px 0 0; border: 1px solid #7c838e; border-width: 1px 0 0 1px; line-height: 9px; font-size: 6px; }
.status span:first-of-type { border-left: 0; padding-left: 0; }
.status i { flex: 0 1 41px; border-right: 1px solid #a0a5ab; }
.status i:nth-of-type(1) { flex-basis: 87px; }
.status i:nth-of-type(2) { flex-basis: 49px; }
.resize { width: 5px; height: 5px; margin: auto 1px 1px auto; background: repeating-linear-gradient(135deg, transparent 0 1px, #7d838c 1px 2px); clip-path: polygon(100% 0, 100% 100%, 0 100%); }

.dropdown { position: absolute; left: 201px; top: 12px; bottom: 0; width: 222px; display: flex; flex-direction: column; padding: 0 0 1px; background: linear-gradient(90deg, #e9eef8 14px, #c9cdd6 14px 15px, #fafafa 15px); border: 1px solid #a7adb6; border-bottom: 0; color: #454852; }
.dropdown li { flex: 1; display: flex; min-height: 0; }
.dropdown .rule { flex: 0 0 5px; margin-left: 17px; background: linear-gradient(transparent 2px, #d0d0d0 2px 3px, transparent 3px); }
.dropdown button { position: relative; flex: 1; display: flex; align-items: center; padding-left: 17px; white-space: nowrap; }
.dropdown svg { width: 10px; height: 10px; margin: 0 5px 0 -15px; }
.dropdown button:disabled { color: #a9a9ab; }
.dropdown .sub { justify-content: space-between; padding-right: 2px; }
.dropdown .sub::after { content: ""; border: 2px solid transparent; border-left: 3px solid #444; border-right: 0; }
.dropdown .checked { background: linear-gradient(90deg, #fcc672 13px, transparent 13px); }
.dropdown .hot { background: linear-gradient(#fdf5d0, #fce07e 50%, #fbc93b 52%, #fdeb9b); }

.callouts { position: absolute; left: -1px; top: -1px; width: calc(100% + 2px); height: auto; pointer-events: none; fill: #c80a0e; font: 700 9px "Liberation Sans", sans-serif; }
```
